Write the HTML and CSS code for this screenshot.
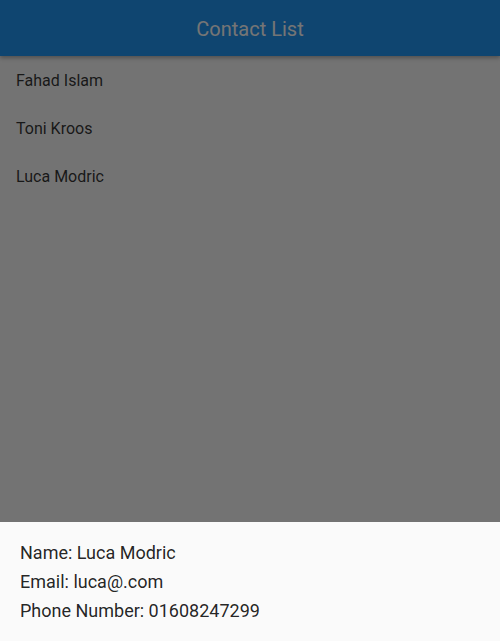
FILE: index.html
```html
<!DOCTYPE html>
<html>
<head>
<meta charset="utf-8">
<link rel="stylesheet" href="styles.css">
</head>
<body>
<div class="app">
  <header class="appbar"><h1 class="title">Contact List</h1></header>
  <ul class="list">
    <li class="tile">Fahad Islam</li>
    <li class="tile">Toni Kroos</li>
    <li class="tile">Luca Modric</li>
  </ul>
  <div class="scrim"></div>
  <div class="sheet">
    <p class="line">Name: Luca Modric</p>
    <p class="line">Email: luca@.com</p>
    <p class="line">Phone Number: 01608247299</p>
  </div>
</div>
</body>
</html>
```
FILE: styles.css
```css
html, body {
  margin: 0;
  padding: 0;
  height: 100%;
}
body {
  font-family: Roboto, "Liberation Sans", sans-serif;
  background: #fafafa;
}
.app {
  position: relative;
  width: 500px;
  height: 641px;
  overflow: hidden;
  background: #fafafa;
}
.appbar {
  height: 56px;
  box-sizing: border-box;
  padding-top: 2px;
  background: #2196f3;
  display: flex;
  align-items: center;
  justify-content: center;
  box-shadow: 0 2px 4px rgba(0,0,0,0.3);
  position: relative;
  z-index: 1;
}
.title {
  margin: 0;
  font-size: 20px;
  font-weight: 400;
  color: #fff;
}
.list {
  list-style: none;
  margin: 0;
  padding: 0;
}
.tile {
  height: 48px;
  display: flex;
  align-items: center;
  padding: 0 16px;
  font-size: 16px;
  color: rgba(0,0,0,0.8);
}
.scrim {
  position: absolute;
  inset: 0;
  background: rgba(0,0,0,0.54);
  z-index: 2;
}
.sheet {
  position: absolute;
  left: 0;
  right: 0;
  bottom: 0;
  z-index: 3;
  background: #fafafa;
  padding: 16px 20px 16px;
  display: flex;
  flex-direction: column;
}
.line {
  margin: 0;
  font-size: 18px;
  line-height: 29px;
  color: rgba(0,0,0,0.87);
}
```
